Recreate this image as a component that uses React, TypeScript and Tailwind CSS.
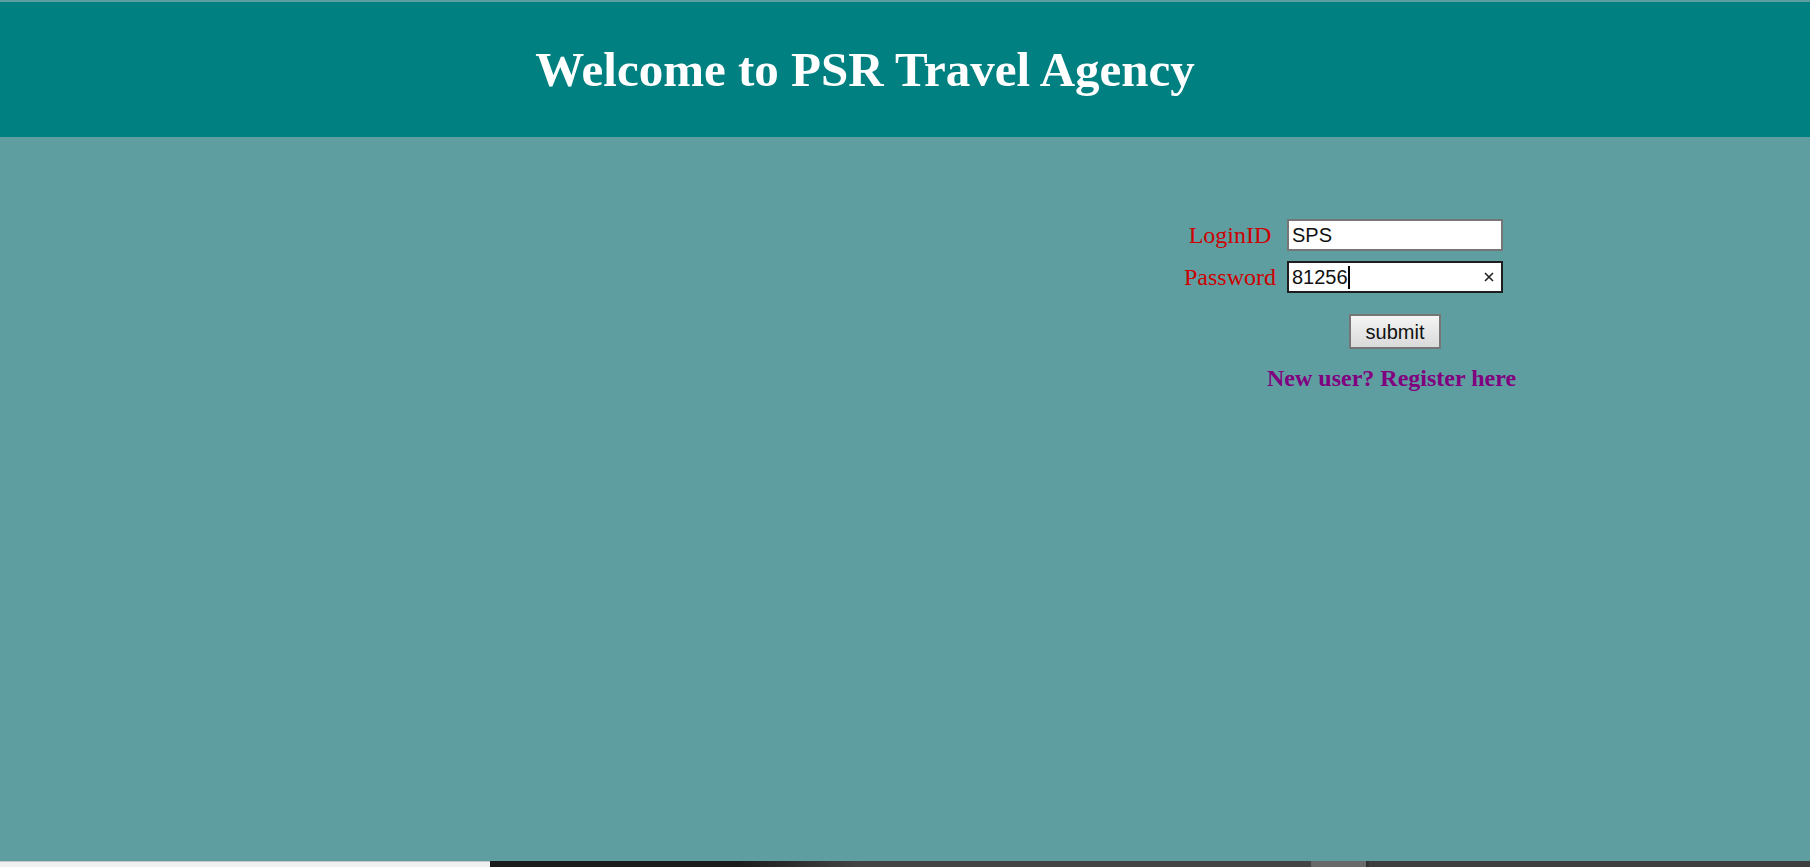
import React from "react"

const serif = "font-['Liberation_Serif','Times_New_Roman',serif]"
const sans = "font-['Liberation_Sans',Arial,sans-serif]"

function Field({ label, value, focused }: { label: string; value: string; focused?: boolean }) {
  return (
    <div className="flex items-center h-[32px]">
      <div className={`w-[98px] text-center text-[24px] leading-[28px] text-[#cc0000] ${serif}`}>{label}</div>
      <div
        className={`ml-[8px] w-[216px] h-[32px] bg-white border-2 flex items-center pl-[3px] pr-[7px] text-[20px] text-[#111] ${sans} ${
          focused ? "border-[#1e1e1e]" : "border-[#767676]"
        }`}
      >
        <span className="leading-[24px]">{value}</span>
        {focused && (
          <>
            {/* caret */}
            <span className="w-[2px] h-[23px] bg-black" />
            <span className="ml-auto">
              <svg width="10" height="10" viewBox="0 0 10 10">
                <path d="M1 1 L9 9 M9 1 L1 9" stroke="#222" strokeWidth="1.6" />
              </svg>
            </span>
          </>
        )}
      </div>
    </div>
  )
}

export default function App() {
  return (
    <div className="w-full h-[867px] bg-[#5f9ea0] flex flex-col overflow-hidden">
      {/* Header */}
      <header className="mt-[2px] h-[135px] bg-[#008080] flex justify-center pr-[80px] pt-[40px]">
        <h1 className={`text-[49px] leading-[56px] font-bold text-white ${serif}`}>Welcome to PSR Travel Agency</h1>
      </header>

      {/* Login form */}
      <main className="flex-1 pl-[1181px] pt-[82px]">
        <Field label="LoginID" value="SPS" />
        <div className="mt-[10px]">
          <Field label="Password" value="81256" focused />
        </div>
        <div className="mt-[21px] ml-[106px] w-[216px] flex justify-center">
          <button
            className={`w-[92px] h-[35px] border-2 border-[#767676] bg-gradient-to-b from-[#f4f4f4] to-[#dadada] text-[20px] text-[#111] ${sans}`}
          >
            submit
          </button>
        </div>
        <div className="mt-[15px] ml-[86px]">
          <a href="#" className={`text-[24px] leading-[28px] font-bold text-[#800080] ${serif}`}>
            New user? Register here
          </a>
        </div>
      </main>

      {/* bottom strip */}
      <div className="h-[6px] flex">
        <div className="w-[490px] bg-[#f0f0f0] border-t border-[#c8c8c8]" />
        <div className="w-[821px] bg-gradient-to-r from-[#1c1c1c] from-[30%] to-[#444] to-[45%]" />
        <div className="w-[55px] bg-[#6a6a6a]" />
        <div className="w-[3px] bg-[#333]" />
        <div className="flex-1 bg-[#3f3f3f]" />
      </div>
    </div>
  )
}
